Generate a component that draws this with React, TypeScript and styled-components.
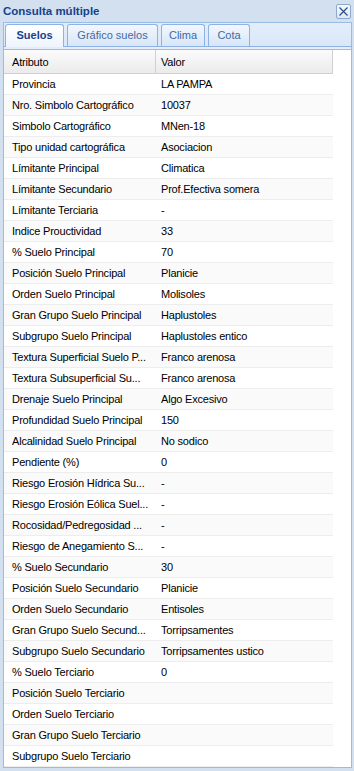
import styled, { createGlobalStyle } from "styled-components";
import { FunctionComponent } from "react";

const GlobalStyle = createGlobalStyle`
  html, body {
    margin: 0;
    padding: 0;
    background: #d3e0f0;
  }
  * {
    box-sizing: border-box;
  }
`;

const WindowWrapper = styled.div`
  display: flex;
  flex-direction: column;
  width: 354px;
  height: 771px;
  padding: 0 2px 3px 3px;
  background: #d3e0f0;
  font-family: "Liberation Sans", Arial, sans-serif;
  overflow: hidden;
`;

const TitleBar = styled.div`
  display: flex;
  align-items: center;
  justify-content: space-between;
  height: 22px;
  padding: 0 1px 0 0;
`;

const Title = styled.div`
  font-size: 11.5px;
  font-weight: bold;
  color: #15428b;
`;

const CloseButton = styled.div`
  display: flex;
  align-items: center;
  justify-content: center;
  width: 15px;
  height: 15px;
  margin-top: 1px;
  border: 1px solid #8ea9cc;
  border-radius: 2px;
  background: linear-gradient(#f4f8fd, #dde8f6);
`;

const TabStrip = styled.div`
  display: flex;
  align-items: flex-end;
  gap: 3px;
  height: 25px;
  padding: 2px 0 0 1px;
  border: 1px solid #99bbe8;
  border-bottom: 1px solid #8db2e3;
  background: linear-gradient(#e4eefb, #d9e7f8);
`;

const Tab = styled.div<{ $active?: boolean; $width: number }>`
  display: flex;
  align-items: center;
  justify-content: center;
  width: ${(p) => p.$width}px;
  height: ${(p) => (p.$active ? "23px" : "22px")};
  margin-bottom: ${(p) => (p.$active ? "-1px" : "0")};
  padding: 0 0 2px;
  border: 1px solid #8db2e3;
  border-bottom: none;
  border-radius: 3px 3px 0 0;
  font-size: 11px;
  font-weight: ${(p) => (p.$active ? "bold" : "normal")};
  color: ${(p) => (p.$active ? "#15428b" : "#416aa3")};
  background: ${(p) =>
    p.$active
      ? "linear-gradient(#ffffff, #eef4fd)"
      : "linear-gradient(#f3f7fd, #d8e6f8)"};
  white-space: nowrap;
  position: relative;
`;

const TabSpacer = styled.div`
  height: 2px;
  background: #e3edfb;
  border-left: 1px solid #99bbe8;
  border-right: 1px solid #99bbe8;
`;

const GridBody = styled.div`
  display: flex;
  flex-direction: column;
  flex-grow: 1;
  border: 1px solid #99bbe8;
  background: #ffffff;
  overflow: hidden;
`;

const HeaderRow = styled.div`
  display: flex;
  width: 329px;
  height: 24px;
  border-bottom: 1px solid #d0d0d0;
  background: linear-gradient(#fbfbfb, #ebebeb);
`;

const Row = styled.div<{ $alt?: boolean }>`
  display: flex;
  flex-shrink: 0;
  width: 329px;
  height: 21px;
  border-bottom: 1px solid #ededed;
  background: ${(p) => (p.$alt ? "#fafafa" : "#ffffff")};
`;

const Cell = styled.div<{ $first?: boolean; $header?: boolean }>`
  display: flex;
  align-items: center;
  width: ${(p) => (p.$first ? "152px" : "177px")};
  padding-left: ${(p) => (p.$first ? "8px" : "5px")};
  border-right: ${(p) => (p.$header ? "1px solid #d0d0d0" : "none")};
  font-size: 11px;
  letter-spacing: -0.2px;
  color: #000000;
  white-space: nowrap;
  overflow: hidden;
`;

const rows: [string, string][] = [
  ["Provincia", "LA PAMPA"],
  ["Nro. Simbolo Cartográfico", "10037"],
  ["Simbolo Cartográfico", "MNen-18"],
  ["Tipo unidad cartográfica", "Asociacion"],
  ["Límitante Principal", "Climatica"],
  ["Límitante Secundario", "Prof.Efectiva somera"],
  ["Límitante Terciaria", "-"],
  ["Indice Prouctividad", "33"],
  ["% Suelo Principal", "70"],
  ["Posición Suelo Principal", "Planicie"],
  ["Orden Suelo Principal", "Molisoles"],
  ["Gran Grupo Suelo Principal", "Haplustoles"],
  ["Subgrupo Suelo Principal", "Haplustoles entico"],
  ["Textura Superficial Suelo P...", "Franco arenosa"],
  ["Textura Subsuperficial Su...", "Franco arenosa"],
  ["Drenaje Suelo Principal", "Algo Excesivo"],
  ["Profundidad Suelo Principal", "150"],
  ["Alcalinidad Suelo Principal", "No sodico"],
  ["Pendiente (%)", "0"],
  ["Riesgo Erosión Hídrica Su...", "-"],
  ["Riesgo Erosión Eólica Suel...", "-"],
  ["Rocosidad/Pedregosidad ...", "-"],
  ["Riesgo de Anegamiento S...", "-"],
  ["% Suelo Secundario", "30"],
  ["Posición Suelo Secundario", "Planicie"],
  ["Orden Suelo Secundario", "Entisoles"],
  ["Gran Grupo Suelo Secund...", "Torripsamentes"],
  ["Subgrupo Suelo Secundario", "Torripsamentes ustico"],
  ["% Suelo Terciario", "0"],
  ["Posición Suelo Terciario", ""],
  ["Orden Suelo Terciario", ""],
  ["Gran Grupo Suelo Terciario", ""],
  ["Subgrupo Suelo Terciario", ""],
];

const tabs: [string, number][] = [
  ["Suelos", 59],
  ["Gráfico suelos", 91],
  ["Clima", 44],
  ["Cota", 42],
];

const App: FunctionComponent = () => {
  return (
    <>
      <GlobalStyle />
      <WindowWrapper>
        <TitleBar>
          <Title>Consulta múltiple</Title>
          <CloseButton>
            <svg width="11" height="11" viewBox="0 0 11 11">
              <path
                d="M1.5 1.5 L9.5 9.5 M9.5 1.5 L1.5 9.5"
                stroke="#2b4f86"
                strokeWidth="1.2"
                fill="none"
              />
            </svg>
          </CloseButton>
        </TitleBar>
        <TabStrip>
          {tabs.map(([t, w], i) => (
            <Tab key={t} $active={i === 0} $width={w}>
              {t}
            </Tab>
          ))}
        </TabStrip>
        <TabSpacer />
        <GridBody>
          <HeaderRow>
            <Cell $first $header>
              Atributo
            </Cell>
            <Cell $header>Valor</Cell>
          </HeaderRow>
          {rows.map(([attr, value], i) => (
            <Row key={attr} $alt={i % 2 === 1}>
              <Cell $first>{attr}</Cell>
              <Cell>{value}</Cell>
            </Row>
          ))}
        </GridBody>
      </WindowWrapper>
    </>
  );
};

export default App;
